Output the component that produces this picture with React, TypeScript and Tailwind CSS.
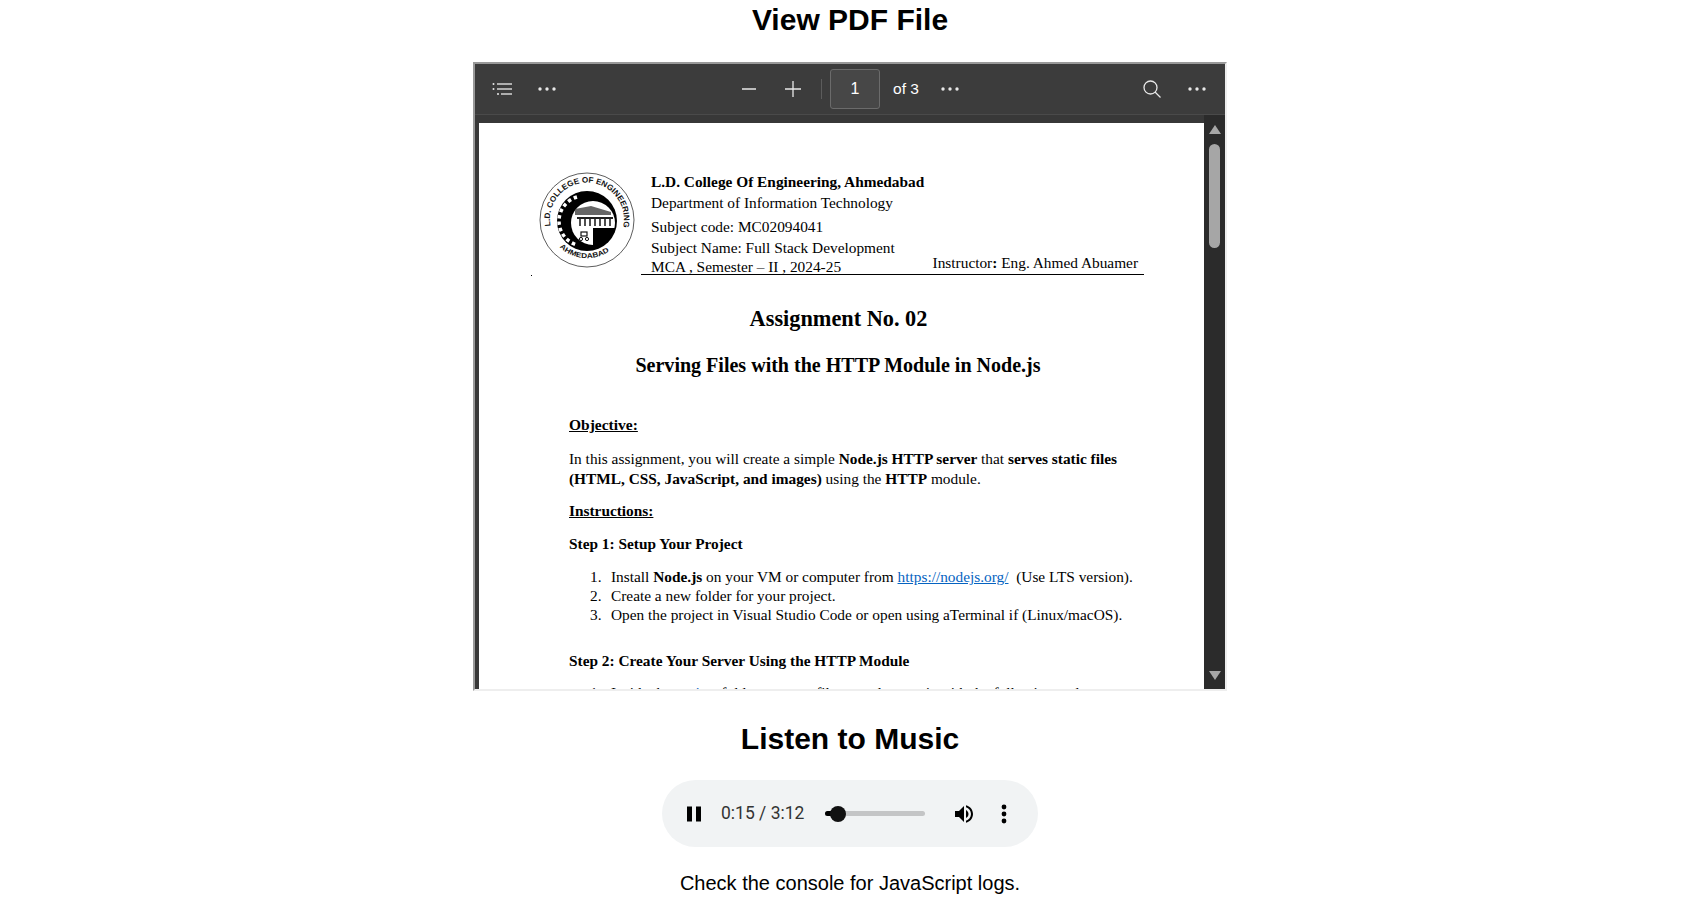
import React from 'react';

const Dots = () => (
  <svg width="18" height="4" viewBox="0 0 18 4" fill="#e8e8e8" className="block">
    <circle cx="2" cy="2" r="1.7" />
    <circle cx="9" cy="2" r="1.7" />
    <circle cx="16" cy="2" r="1.7" />
  </svg>
);

const CollegeLogo = () => (
  <svg width="96" height="96" viewBox="0 0 96 96" className="mt-[1px] shrink-0">
    <defs>
      <path id="arcTop" d="M 11.5 54 A 37 37 0 1 1 82.8 60" />
      <path id="arcBottom" d="M 15 68 A 39 39 0 0 0 81 68" />
      <clipPath id="inner">
        <circle cx="54" cy="51" r="22" />
      </clipPath>
    </defs>
    <circle cx="48" cy="48" r="47" fill="white" stroke="#333" strokeWidth="0.8" />
    <text fontFamily="'Liberation Sans', sans-serif" fontSize="8" fontWeight="700" fill="#111">
      <textPath href="#arcTop" textLength="130" lengthAdjust="spacingAndGlyphs">L.D. COLLEGE OF ENGINEERING</textPath>
    </text>
    <text fontFamily="'Liberation Sans', sans-serif" fontSize="7" fontWeight="700" fill="#111">
      <textPath href="#arcBottom" startOffset="9" textLength="54" lengthAdjust="spacingAndGlyphs">AHMEDABAD</textPath>
    </text>
    <circle cx="48" cy="49" r="30" fill="#000" />
    {/* gear on the left of the badge */}
    <path d="M38 25 A25 25 0 0 0 38 73" fill="none" stroke="#fff" strokeWidth="3.5" strokeDasharray="3.5 3" />
    <g clipPath="url(#inner)">
      <rect x="30" y="28" width="48" height="28" fill="#fff" />
      <rect x="30" y="56" width="24" height="20" fill="#fff" />
      <rect x="54" y="56" width="24" height="20" fill="#000" />
      <path d="M36 37L52 34L72 40V43H36Z" fill="#666" />
      <path d="M38 46H74" stroke="#222" strokeWidth="2" />
      <path d="M41 47V54M46 47V54M51 47V54M56 47V54M61 47V54M66 47V54M71 47V54" stroke="#222" strokeWidth="1.6" />
      <rect x="42" y="60" width="6" height="4" fill="none" stroke="#111" strokeWidth="1.2" />
      <circle cx="42" cy="67" r="1.6" fill="none" stroke="#111" strokeWidth="1" />
      <circle cx="48" cy="67" r="1.6" fill="none" stroke="#111" strokeWidth="1" />
    </g>
  </svg>
);

export default function App() {
  return (
    <div className="min-h-[909px] bg-white pl-[5px] text-center font-['Liberation_Sans',Arial,sans-serif] text-black">
      <h2 className="pt-[2px] text-[30px] leading-[35px] font-bold">View PDF File</h2>

      <div className="mx-auto mt-[25px] flex h-[629px] w-[754px] flex-col overflow-hidden border-2 border-t-[#999999] border-r-[#eeeeee] border-b-[#eeeeee] border-l-[#999999] bg-[#383838] text-left">
        <div className="flex h-[51px] shrink-0 items-center justify-between border-b border-[#4a4a4a] bg-[#3c3c3c] text-white">
          <div className="flex items-center">
            <svg className="ml-[17px]" width="21" height="14" viewBox="0 0 21 14" fill="none" stroke="#d4d4d4" strokeWidth="1.5">
              <path d="M5 2H20M5 7H20M9 12H20" />
              <circle cx="1.5" cy="2" r="1" fill="#e8e8e8" stroke="none" />
              <circle cx="1.5" cy="7" r="1" fill="#e8e8e8" stroke="none" />
              <circle cx="6" cy="12" r="1" fill="#e8e8e8" stroke="none" />
            </svg>
            <div className="ml-[25px]"><Dots /></div>
          </div>
          <div className="flex items-center pl-[2px]">
            <svg width="14" height="14" viewBox="0 0 14 14" stroke="#e8e8e8" strokeWidth="1.5"><path d="M0 7H14" /></svg>
            <svg className="ml-[29px]" width="16" height="16" viewBox="0 0 16 16" stroke="#e8e8e8" strokeWidth="1.3"><path d="M0 8H16M8 0V16" /></svg>
            <div className="ml-[20px] h-[20px] w-px bg-[#5c5c5c]" />
            <div className="ml-[8px] flex h-[40px] w-[50px] items-center justify-center rounded-[3px] border border-[#6b6b6b] bg-[#474747] text-[16px]">1</div>
            <span className="ml-[13px] text-[15.5px]">of 3</span>
            <div className="ml-[22px]"><Dots /></div>
          </div>
          <div className="flex items-center">
            <svg width="18" height="18" viewBox="0 0 18 18" fill="none" stroke="#e8e8e8" strokeWidth="1.3">
              <circle cx="7.5" cy="7.5" r="6.5" />
              <path d="M12 12L17.5 17.5" />
            </svg>
            <div className="mr-[19px] ml-[27px]"><Dots /></div>
          </div>
        </div>

        <div className="flex min-h-0 flex-1">
          <div className="flex-1 overflow-hidden pt-[8px] pl-[4px]">
            <div className="h-[800px] bg-white font-['Liberation_Serif','Times_New_Roman',serif] text-[15.35px] text-black">
              <div className="relative flex pt-[48px] pl-[60px]">
                <CollegeLogo />
                <span className="absolute top-[152px] left-[52px] h-px w-px bg-black" />
                <div className="ml-[16px] w-[483px]">
                  <div className="mt-[1px] leading-[20px] font-bold">L.D. College Of Engineering, Ahmedabad</div>
                  <div className="mt-[1px] leading-[20px]">Department of Information Technology</div>
                  <div className="mt-[4px] leading-[20px]">Subject code: MC02094041</div>
                  <div className="mt-[1px] leading-[20px]">Subject Name: Full Stack Development</div>
                  <div className="-mt-[1px] -mr-[10px] -ml-[10px] flex h-[18px] justify-between border-b border-black pr-[6px] pl-[10px] leading-[20px]">
                    <span>MCA , Semester – II , 2024-25</span>
                    <span className="-translate-y-[4px]">Instructor<b>:</b> Eng. Ahmed Abuamer</span>
                  </div>
                </div>
              </div>
              <h1 className="mt-[30px] pr-[6px] text-center text-[22.3px] leading-[28px] font-bold">Assignment No. 02</h1>
              <h2 className="mt-[19px] pr-[7px] text-center text-[20.05px] leading-[26px] font-bold">Serving Files with the HTTP Module in Node.js</h2>
              <div className="pl-[90px]">
                <div className="mt-[37px] text-[15.5px] leading-[20px] font-bold underline">Objective:</div>
                <p className="mt-[14px] leading-[19.5px]">In this assignment, you will create a simple <b>Node.js HTTP server</b> that <b>serves static files</b></p>
                <p className="leading-[19.5px]"><b>(HTML, CSS, JavaScript, and images)</b> using the <b>HTTP</b> module.</p>
                <div className="mt-[13px] leading-[20px] font-bold underline">Instructions:</div>
                <div className="mt-[12.5px] leading-[20px] font-bold">Step 1: Setup Your Project</div>
                <ol className="mt-[13.5px] pl-[21px] leading-[19px]">
                  <li><span className="inline-block w-[21px]">1.</span>Install <b>Node.js</b> on your VM or computer from <span className="text-[#0563c1] underline">https://nodejs.org/</span>&nbsp; (Use LTS version).</li>
                  <li><span className="inline-block w-[21px]">2.</span>Create a new folder for your project.</li>
                  <li><span className="inline-block w-[21px]">3.</span>Open the project in Visual Studio Code or open using aTerminal if (Linux/macOS).</li>
                </ol>
                <div className="mt-[26.5px] leading-[20px] font-bold">Step 2: Create Your Server Using the HTTP Module</div>
                <div className="mt-[12px] pl-[21px] leading-[19px]"><span className="inline-block w-[21px]">1.</span>Inside the <span className="text-[#0563c1]">project</span> folder, create a file named server.js with the following code:</div>
              </div>
            </div>
          </div>
          <div className="flex w-[21px] shrink-0 flex-col items-center justify-between bg-[#2b2b2b] pt-[10px] pb-[9px]">
            <div className="flex flex-col items-center">
              <div className="h-0 w-0 border-r-[6.5px] border-b-[9px] border-l-[6.5px] border-r-transparent border-b-[#a6a6a6] border-l-transparent" />
              <div className="mt-[10px] h-[104px] w-[11.5px] rounded-full bg-[#a6a6a6]" />
            </div>
            <div className="h-0 w-0 border-t-[9px] border-r-[6.5px] border-l-[6.5px] border-t-[#a6a6a6] border-r-transparent border-l-transparent" />
          </div>
        </div>
      </div>

      <h2 className="mt-[30px] text-[30px] leading-[35px] font-bold">Listen to Music</h2>

      <div className="mx-auto mt-[24px] flex h-[67px] w-[376px] items-center rounded-full bg-[#f1f3f4] text-left text-[#1f1f1f]">
        <svg className="ml-[25px]" width="14" height="16" viewBox="0 0 14 16" fill="#000">
          <rect x="0" y="0.5" width="5" height="15" />
          <rect x="9" y="0.5" width="5" height="15" />
        </svg>
        <span className="ml-[20px] font-['Roboto',sans-serif] text-[17.5px] text-[#333]">0:15 / 3:12</span>
        <div className="relative ml-[21px] h-[5px] w-[100px] rounded-full bg-[#c4c5c6]">
          <div className="h-full w-[13px] rounded-l-full bg-black" />
          <div className="absolute top-[-5.5px] left-[5px] h-[16px] w-[16px] rounded-full bg-[#111]" />
        </div>
        <svg className="ml-[27px]" width="24" height="24" viewBox="0 0 24 24" fill="#000">
          <path d="M3 9v6h4l5 5V4L7 9H3zm13.5 3c0-1.77-1.02-3.29-2.5-4.03v8.05c1.48-.73 2.5-2.25 2.5-4.02zM14 3.23v2.06c2.89.86 5 3.54 5 6.71s-2.11 5.85-5 6.71v2.06c4.01-.91 7-4.49 7-8.77s-2.99-7.86-7-8.77z" />
        </svg>
        <svg className="ml-[25px]" width="6" height="20" viewBox="0 0 6 20" fill="#000">
          <circle cx="3" cy="3" r="2.4" />
          <circle cx="3" cy="10" r="2.4" />
          <circle cx="3" cy="17" r="2.4" />
        </svg>
      </div>

      <p className="mt-[25px] text-[20px] leading-[23px]">Check the console for JavaScript logs.</p>
    </div>
  );
}
